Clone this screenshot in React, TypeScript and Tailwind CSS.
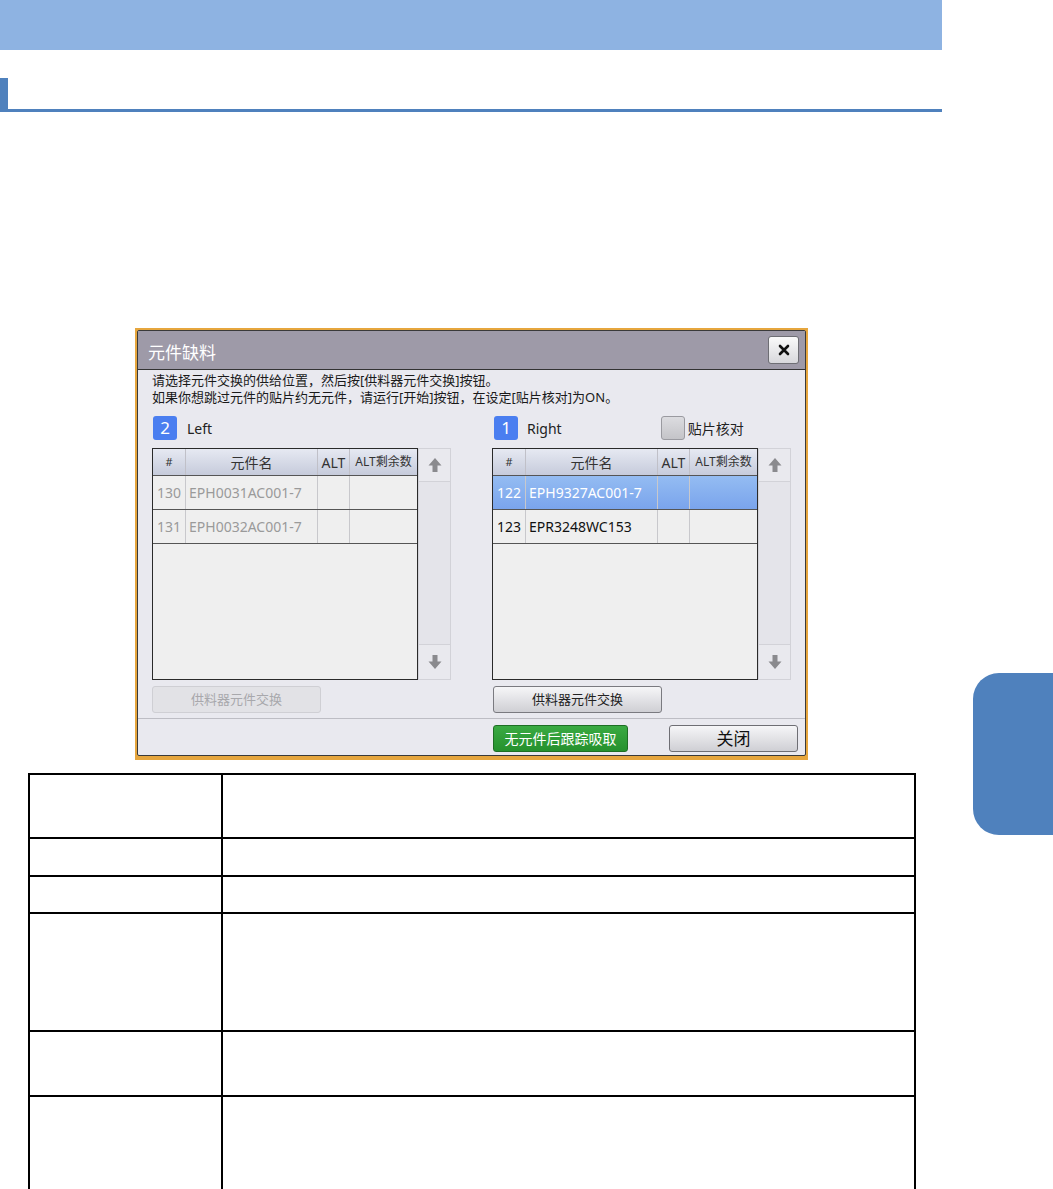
const font = { fontFamily: '"Noto Sans", "Noto Sans CJK SC", sans-serif' };

type Row = { no: string; name: string };

const leftRows: Row[] = [
  { no: "130", name: "EPH0031AC001-7" },
  { no: "131", name: "EPH0032AC001-7" },
];

const rightRows: Row[] = [
  { no: "122", name: "EPH9327AC001-7" },
  { no: "123", name: "EPR3248WC153" },
];

function Arrow({ down }: { down?: boolean }) {
  return (
    <svg width="14" height="16" viewBox="0 0 14 16" className={down ? "rotate-180" : ""}>
      <path d="M7 1 L13.5 8.5 H9.5 V15 H4.5 V8.5 H0.5 Z" fill="#8a8a8e" />
    </svg>
  );
}

function PartTable({ rows, disabled, selected }: { rows: Row[]; disabled?: boolean; selected?: number }) {
  const cols = "grid grid-cols-[33px_132px_32px_1fr]";
  return (
    <div className="flex h-[232px]">
      <div className="w-[266px] h-full border border-[#2a2a2a] bg-[#efefef] flex flex-col">
        <div className={`${cols} h-[27px] bg-gradient-to-b from-[#e6e9f2] to-[#c6cbdb] border-b border-[#555] text-[#333]`}>
          <div className="flex items-center justify-center text-[11px] border-r border-[#c0c0c8]">#</div>
          <div className="flex items-center justify-center text-[14px] border-r border-[#c0c0c8]">元件名</div>
          <div className="flex items-center justify-center text-[14px] border-r border-[#c0c0c8]">ALT</div>
          <div className="flex items-center justify-center text-[12px]">ALT剩余数</div>
        </div>
        {rows.map((r, i) => {
          const sel = selected === i;
          const text = sel ? "text-white" : disabled ? "text-[#9a9a9a]" : "text-[#111]";
          return (
            <div
              key={r.no}
              className={`${cols} h-[34px] border-b border-[#555] ${sel ? "bg-gradient-to-b from-[#94bcf2] to-[#7aa4ec]" : ""} ${text}`}
            >
              <div className="flex items-center justify-center text-[14px] border-r border-[#c8c8cc]">{r.no}</div>
              <div className="flex items-center pl-[3px] text-[14px] border-r border-[#c8c8cc]">{r.name}</div>
              <div className="border-r border-[#c8c8cc]" />
              <div />
            </div>
          );
        })}
      </div>
      <div className="w-[33px] h-full bg-[#e4e4ea] border border-[#d2d2d8] flex flex-col justify-between">
        <div className="h-[33px] flex items-center justify-center border-b border-[#d2d2d8] bg-[#e9e9ee]">
          <Arrow />
        </div>
        <div className="h-[35px] flex items-center justify-center border-t border-[#d2d2d8] bg-[#e9e9ee]">
          <Arrow down />
        </div>
      </div>
    </div>
  );
}

function SwapButton({ disabled }: { disabled?: boolean }) {
  return (
    <button
      className={`w-[169px] h-[27px] rounded-[3px] border text-[13px] ${
        disabled
          ? "border-[#cfcfd4] bg-[#e2e2e6] text-[#a8a8ac]"
          : "border-[#7a7a80] bg-gradient-to-b from-[#f6f6f8] to-[#cfcfd4] text-[#222]"
      }`}
    >
      供料器元件交换
    </button>
  );
}

function Badge({ n }: { n: string }) {
  return (
    <div className="w-[24px] h-[24px] rounded-[3px] bg-[#4a7ef0] text-white text-[17px] flex items-center justify-center">
      {n}
    </div>
  );
}

function Dialog() {
  return (
    <div className="ml-[135px] w-[673px] h-[432px] bg-[#e6a63e] pt-[2px] pl-[2px] pr-[2px] pb-[4px]">
      <div className="h-full bg-[#e9e9ef] border border-[#3a3a3a] rounded-[2px] flex flex-col">
        <div className="h-[39px] bg-[#9e9aa8] border-b border-[#333] flex items-center justify-between pl-[10px] pr-[6px]">
          <span className="text-white text-[17px] mt-[6px]">元件缺料</span>
          <button className="w-[31px] h-[28px] rounded-[3px] border border-[#6e6e74] bg-gradient-to-b from-[#fafafa] to-[#d8d8dc] flex items-center justify-center">
            <svg width="12" height="12" viewBox="0 0 12 12">
              <path d="M2 2 L10 10 M10 2 L2 10" stroke="#111" strokeWidth="2.6" strokeLinecap="round" />
            </svg>
          </button>
        </div>
        <div className="px-[14px] pt-[2px] text-[13px] leading-[17px] text-[#1a1a1a]">
          <p>请选择元件交换的供给位置，然后按[供料器元件交换]按钮。</p>
          <p>如果你想跳过元件的贴片约无元件，请运行[开始]按钮，在设定[贴片核对]为ON。</p>
        </div>
        <div className="flex justify-between px-[14px] mt-[10px]">
          <div className="w-[299px]">
            <div className="flex items-center gap-[10px] ml-[1px] h-[24px]">
              <Badge n="2" />
              <span className="text-[14px] text-[#222]">Left</span>
            </div>
            <div className="mt-[8px]">
              <PartTable rows={leftRows} disabled />
            </div>
            <div className="mt-[6px]">
              <SwapButton disabled />
            </div>
          </div>
          <div className="w-[299px]">
            <div className="flex items-center h-[24px]">
              <div className="ml-[2px]"><Badge n="1" /></div>
              <span className="ml-[9px] text-[14px] text-[#222]">Right</span>
              <div className="ml-[99px] w-[24px] h-[24px] rounded-[3px] border border-[#9a9aa0] bg-gradient-to-b from-[#dcdce0] to-[#c4c4c8]" />
              <span className="ml-[3px] text-[14px] text-[#222]">贴片核对</span>
            </div>
            <div className="mt-[8px]">
              <PartTable rows={rightRows} selected={0} />
            </div>
            <div className="mt-[6px] ml-[1px]">
              <SwapButton />
            </div>
          </div>
        </div>
        <div className="mt-[5px] border-t border-[#bdbdc4]" />
        <div className="flex mt-[6px] pl-[355px] gap-[41px]">
          <button className="w-[135px] h-[27px] rounded-[3px] border border-[#1e6e24] bg-gradient-to-b from-[#3aaa42] to-[#25912d] text-white text-[14px]">
            无元件后跟踪吸取
          </button>
          <button className="w-[129px] h-[27px] rounded-[3px] border border-[#6e6e74] bg-gradient-to-b from-[#f6f6f8] to-[#cfcfd4] text-[#111] text-[17px]">
            关闭
          </button>
        </div>
      </div>
    </div>
  );
}

const tableRows = [64, 38, 37, 118, 65, 93];

export default function App() {
  return (
    <div className="relative w-[1053px] h-[1189px] overflow-hidden bg-white" style={font}>
      <div className="h-[50px] w-[942px] bg-[#8eb3e2]" />
      <div className="mt-[28px] h-[34px] w-[942px] border-b-[3px] border-[#4f81bd] flex">
        <div className="w-[8px] h-full bg-[#4f81bd]" />
      </div>
      <div className="h-[216px]" />
      <Dialog />
      <div className="ml-[28px] mt-[13px] w-[888px] border-2 border-black">
        {tableRows.map((h, i) => (
          <div
            key={i}
            className={`grid grid-cols-[193px_1fr] ${i < tableRows.length - 1 ? "border-b-2 border-black" : ""}`}
            style={{ height: h }}
          >
            <div className="border-r-2 border-black" />
            <div />
          </div>
        ))}
      </div>
      <div className="absolute left-[973px] top-[673px] w-[80px] h-[162px] rounded-l-[26px] bg-[#4f81bd]" />
    </div>
  );
}
